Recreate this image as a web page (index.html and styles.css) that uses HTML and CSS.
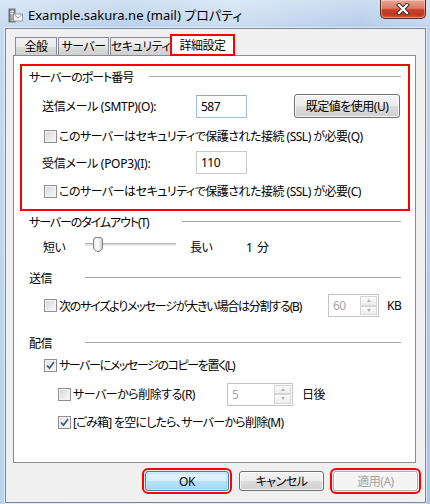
FILE: index.html
```html
<!DOCTYPE html>
<html lang="ja">
<head>
<meta charset="utf-8">
<title>Example.sakura.ne (mail) プロパティ</title>
<link rel="stylesheet" href="styles.css">
</head>
<body>
<div class="window">
  <div class="titlebar">
    <svg class="app-icon" width="15" height="15" viewBox="0 0 15 15">
      <defs>
        <linearGradient id="srv" x1="0" y1="0" x2="1" y2="0">
          <stop offset="0" stop-color="#6d6f73"/>
          <stop offset="0.5" stop-color="#b9bcc0"/>
          <stop offset="1" stop-color="#7d8085"/>
        </linearGradient>
      </defs>
      <rect x="1" y="1" width="6" height="13" fill="url(#srv)" stroke="#55585c" stroke-width="0.8"/>
      <rect x="2.2" y="3" width="3.6" height="0.9" fill="#e8e8e8"/>
      <rect x="2.2" y="5" width="3.6" height="0.9" fill="#e8e8e8"/>
      <rect x="5.5" y="6" width="9" height="7" fill="#f4f4f4" stroke="#8a8d91" stroke-width="0.8"/>
      <path d="M5.8 6.3 L10 10 L14.2 6.3" fill="none" stroke="#8a8d91" stroke-width="0.8"/>
      <rect x="2.2" y="11" width="1.5" height="1.5" fill="#6fbf4a"/>
    </svg>
    <span class="title">Example.sakura.ne (mail) プロパティ</span>
    <div class="close">
      <svg width="16" height="12" viewBox="0 0 16 12">
        <path d="M4 2 L12 10 M12 2 L4 10" stroke="#4a2a26" stroke-width="4.2" stroke-linecap="square" fill="none"/>
        <path d="M4 2 L12 10 M12 2 L4 10" stroke="#ffffff" stroke-width="2.2" stroke-linecap="square" fill="none"/>
      </svg>
    </div>
  </div>

  <div class="client">
    <div class="tabs">
      <div class="tab t1">全般</div>
      <div class="tab t2">サーバー</div>
      <div class="tab t3">セキュリティ</div>
      <div class="tab active">詳細設定</div>
    </div>

    <div class="panel">
      <div class="group marked">
        <div class="group-head"><span class="h-port">サーバーのポート番号</span><i class="rule near"></i></div>
        <div class="row port r-smtp">
          <span class="field-label">送信メール (SMTP)(O):</span>
          <div class="textbox hot">587</div>
          <div class="btn std">既定値を使用(U)</div>
        </div>
        <div class="row check r-c1"><span class="box"></span><span>このサーバーはセキュリティで保護された接続 (SSL) が必要(Q)</span></div>
        <div class="row port r-pop">
          <span class="field-label">受信メール (POP3)(I):</span>
          <div class="textbox">110</div>
        </div>
        <div class="row check r-c2"><span class="box"></span><span>このサーバーはセキュリティで保護された接続 (SSL) が必要(C)</span></div>
      </div>

      <div class="group plain">
        <div class="group-head"><span class="h-timeout">サーバーのタイムアウト(T)</span><i class="rule"></i></div>
        <div class="row slider-row">
          <span class="s-short">短い</span>
          <div class="track"><span class="thumb"></span></div>
          <span class="s-long">長い</span>
          <span class="s-val">1 分</span>
        </div>
      </div>

      <div class="group plain g-send">
        <div class="group-head"><span>送信</span><i class="rule"></i></div>
        <div class="row check r-split">
          <span class="box"></span><span class="split-label">次のサイズよりメッセージが大きい場合は分割する(B)</span>
          <div class="spin w60"><span class="spin-val">60</span><span class="spin-btns"><span class="sb up"></span><span class="sb dn"></span></span></div>
          <span class="unit">KB</span>
        </div>
      </div>

      <div class="group plain g-deliver">
        <div class="group-head"><span>配信</span><i class="rule"></i></div>
        <div class="row check r-copy"><span class="box on"><svg width="9" height="9" viewBox="0 0 9 9"><path d="M1 4.5 L3.5 7.2 L8 1" fill="none" stroke="#3d5a8c" stroke-width="1.8"/></svg></span><span class="copy-label">サーバーにメッセージのコピーを置く(L)</span></div>
        <div class="row check sub r-del">
          <span class="box"></span><span class="del-label">サーバーから削除する(R)</span>
          <div class="spin w5"><span class="spin-val">5</span><span class="spin-btns"><span class="sb up"></span><span class="sb dn"></span></span></div>
          <span class="unit">日後</span>
        </div>
        <div class="row check sub r-trash"><span class="box on"><svg width="9" height="9" viewBox="0 0 9 9"><path d="M1 4.5 L3.5 7.2 L8 1" fill="none" stroke="#3d5a8c" stroke-width="1.8"/></svg></span><span class="trash-label">[ごみ箱] を空にしたら、サーバーから削除(M)</span></div>
      </div>
    </div>

    <div class="buttons">
      <div class="btn ok marked-btn">OK</div>
      <div class="btn std cancel">キャンセル</div>
      <div class="btn off marked-btn">適用(A)</div>
    </div>
  </div>
</div>
</body>
</html>
```

FILE: styles.css
```css
* { box-sizing: border-box; }
html, body { margin: 0; padding: 0; }
body {
  width: 430px;
  height: 504px;
  overflow: hidden;
  font-family: "Noto Sans", "Noto Sans CJK JP", sans-serif;
  font-size: 12px;
  letter-spacing: -0.5px;
  color: #000;
  font-feature-settings: "palt";
  background: #b8d0ea;
  white-space: nowrap;
}

.window {
  width: 430px;
  height: 504px;
  display: flex;
  flex-direction: column;
  padding: 0 4px 1px 5px;
  background:
    linear-gradient(180deg, rgba(255,255,255,0.35) 0%, rgba(255,255,255,0) 30px),
    linear-gradient(100deg, #c7dbf1 0%, #b6cfeb 25%, #cadcf0 45%, #b2cbe8 70%, #c1d6ee 85%, #a8c3e4 100%);
}

/* title bar */
.titlebar {
  height: 28px;
  flex: none;
  display: flex;
  align-items: center;
  position: relative;
}
.app-icon { margin-left: 3px; margin-top: 2px; }
.title {
  margin-left: 5px;
  margin-top: 1px;
  font-size: 13px;
  letter-spacing: 0;
  color: #000;
}
.close {
  position: absolute;
  right: 0;
  top: 0;
  width: 46px;
  height: 19px;
  border: 1px solid #5a2b25;
  border-top: none;
  border-radius: 0 0 5px 5px;
  background: linear-gradient(180deg, #eba595 0%, #dc7a63 45%, #c9412a 55%, #c0371f 80%, #d8583b 100%);
  box-shadow: inset 0 0 0 1px rgba(255,255,255,0.35);
  display: flex;
  align-items: center;
  justify-content: center;
}

/* client */
.client {
  flex: 1;
  border: 1px solid #7b8899;
  box-shadow: 0 0 0 1px rgba(255,255,255,0.55);
  background: #f0f0f0;
  padding: 5px 7px 0 7px;
  display: flex;
  flex-direction: column;
}

/* tabs */
.tabs {
  display: flex;
  align-items: flex-end;
  height: 21px;
  margin-left: 2px;
  position: relative;
  z-index: 2;
}
.tab {
  height: 18px;
  border: 1px solid #898c95;
  border-bottom: none;
  background: linear-gradient(180deg, #f2f2f2 0%, #ebebeb 50%, #dddddd 51%, #cfcfcf 100%);
  display: flex;
  align-items: center;
  justify-content: center;
  margin-right: 1px;
  line-height: 1;
}
.t1 { width: 42px; }
.t2 { width: 51px; }
.t3 { width: 61px; margin-right: 0; }
.tab.active {
  width: 65px;
  height: 22px;
  margin-left: -1px;
  margin-bottom: -1px;
  border: 2px solid #ff0000;
  background: #fff;
  padding-top: 1px;
}

/* panel */
.panel {
  width: 403px;
  height: 408px;
  flex: none;
  border: 1px solid #898c95;
  background: #fff;
  padding: 8px 5px 0 6px;
  display: flex;
  flex-direction: column;
}

.group { padding: 0 7px; display: flex; flex-direction: column; }
.group.marked {
  border: 2px solid #ff0000;
  padding-bottom: 10px;
}
.group.plain { margin-left: 2px; margin-right: 2px; }

.group-head {
  height: 22px;
  display: flex;
  align-items: center;
}
.h-port { letter-spacing: -1px; }
.h-timeout { letter-spacing: -1.1px; }
.rule {
  flex: 1;
  height: 1px;
  background: #a8a8a8;
  margin-left: 33px;
  margin-right: 0;
  margin-top: -1px;
}
.rule.near { margin-left: 16px; }

.row { display: flex; align-items: center; }

.port { padding-left: 13px; }
.r-smtp { height: 24px; margin-top: 6px; }
.r-pop { height: 23px; margin-top: 7px; }
.field-label { width: 154px; flex: none; letter-spacing: -0.3px; }

.textbox {
  width: 51px;
  height: 23px;
  border: 1px solid #c9c9c9;
  background: #fff;
  padding-left: 4px;
  display: flex;
  align-items: center;
}
.textbox.hot { border-color: #a3bcd8; border-top-color: #8ea8c6; }

.check { padding-left: 15px; height: 16px; }
.check.sub { padding-left: 29px; }
.r-c1 { margin-top: 10px; }
.r-c2 { margin-top: 9px; }

.box {
  width: 13px;
  height: 13px;
  flex: none;
  border: 1px solid #8f8f8f;
  background: linear-gradient(135deg, #d2d2d2 0%, #ededed 60%, #f8f8f8 100%);
  box-shadow: inset 0 0 0 1px #f4f4f4;
  margin-right: 2px;
  display: flex;
  align-items: center;
  justify-content: center;
}
.box.on { background: linear-gradient(135deg, #e0e0e0 0%, #f3f3f3 60%, #fbfbfb 100%); }

/* buttons */
.btn {
  height: 24px;
  border: 1px solid #707070;
  border-radius: 3px;
  display: flex;
  align-items: center;
  justify-content: center;
  box-shadow: inset 0 0 0 1px rgba(255,255,255,0.75);
}
.btn.std {
  background: linear-gradient(180deg, #f3f3f3 0%, #ebebeb 50%, #dddddd 51%, #cfcfcf 100%);
}
.r-smtp .btn { width: 106px; margin-left: auto; margin-right: 1px; }

/* slider */
.slider-row { height: 16px; margin-top: 6px; padding-left: 14px; }
.s-short { width: 42px; flex: none; }
.track {
  width: 91px;
  height: 3px;
  flex: none;
  border-top: 1px solid #b5b5b5;
  border-bottom: 1px solid #e8e8e8;
  background: #e2e2e2;
  position: relative;
  margin-top: -6px;
}
.thumb {
  position: absolute;
  left: 8px;
  top: -7px;
  width: 10px;
  height: 15px;
  border: 1px solid #7c7c7c;
  border-radius: 3px 3px 5px 5px;
  background: linear-gradient(90deg, #e9e9e9 0%, #ffffff 40%, #d4d4d4 100%);
}
.s-long { margin-left: 14px; width: 56px; flex: none; }
.s-val { letter-spacing: 0.5px; }

/* send */
.g-send .group-head { margin-top: 12px; }
.r-split { height: 23px; margin-top: 5px; }
.split-label { width: 269px; flex: none; letter-spacing: -1.2px; }

.spin {
  height: 23px;
  border: 1px solid #c3c3c3;
  background: #fff;
  display: flex;
  align-items: center;
  justify-content: space-between;
  padding: 1px;
  flex: none;
}
.spin-val { color: #a7a7a7; padding-left: 3px; }
.spin.w60 { width: 51px; }
.spin.w5 { width: 66px; }
.spin-btns {
  width: 17px;
  height: 19px;
  display: flex;
  flex-direction: column;
}
.sb {
  flex: 1;
  border: 1px solid #d6d6d6;
  background: linear-gradient(180deg, #fbfbfb, #ededed);
  display: flex;
  align-items: center;
  justify-content: center;
}
.sb::before {
  content: "";
  width: 0;
  height: 0;
  border-left: 2.5px solid transparent;
  border-right: 2.5px solid transparent;
}
.sb.up::before { border-bottom: 3px solid #b0b0b0; }
.sb.dn::before { border-top: 3px solid #b0b0b0; }
.unit { margin-left: 8px; }

/* deliver */
.g-deliver .group-head { margin-top: 15px; }
.r-copy { margin-top: 3px; }
.copy-label { letter-spacing: -1.4px; }
.r-del { height: 22px; margin-top: 10px; }
.del-label { width: 154px; flex: none; }
.r-del .unit { margin-left: 9px; }
.r-trash { margin-top: 9px; }
.trash-label { letter-spacing: -0.75px; }

/* bottom buttons */
.buttons {
  display: flex;
  justify-content: flex-end;
  margin-top: 8px;
}
.buttons .btn { width: 85px; height: 20px; }
.buttons .ok {
  width: 84px;
  margin-right: 10px;
  border-color: #3c7fb1;
  background: linear-gradient(180deg, #e8f6fd 0%, #d6effc 50%, #b8e2f7 51%, #a7d9f5 100%);
  box-shadow: inset 0 0 0 1px rgba(255,255,255,0.6), inset 0 0 2px 1px #6ac8ef;
}
.buttons .cancel { margin-right: 9px; }
.buttons .off {
  border-color: #adb2b5;
  background: #f4f4f4;
  color: #a3a3a3;
}
.marked-btn {
  outline: 2px solid #ff0000;
  outline-offset: 1px;
}
```
